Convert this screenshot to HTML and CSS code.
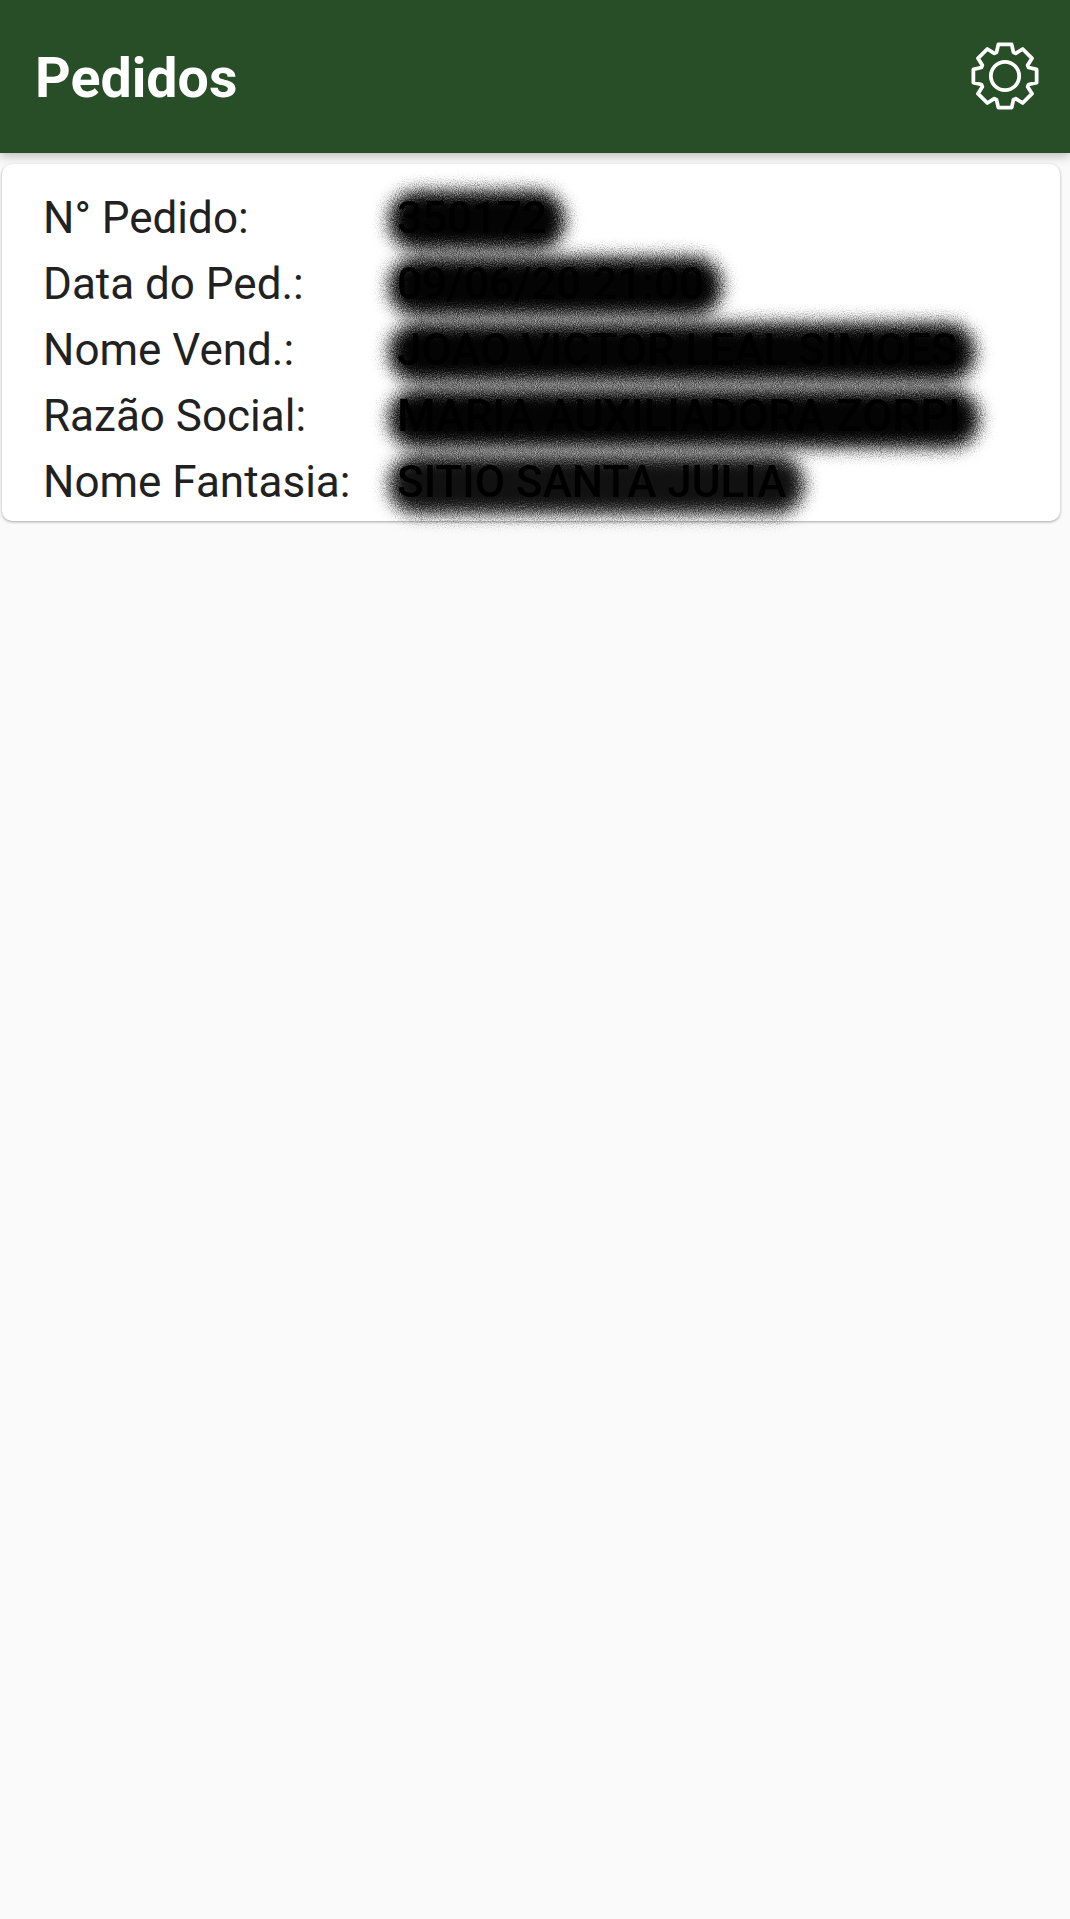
FILE: index.html
```html
<!DOCTYPE html>
<html lang="pt">
<head>
<meta charset="utf-8" />
<title>Pedidos</title>
<link rel="stylesheet" href="styles.css">
</head>
<body>
<svg class="defs" width="0" height="0">
    <filter id="grain" x="-20%" y="-80%" width="140%" height="260%" color-interpolation-filters="sRGB">
        <feGaussianBlur stdDeviation="8" result="soft"/>
        <feTurbulence type="fractalNoise" baseFrequency="0.95" numOctaves="2" seed="4" result="noise"/>
        <feDisplacementMap in="soft" in2="noise" scale="16" xChannelSelector="R" yChannelSelector="G"/>
    </filter>
</svg>
<div id="header">
    <div class="title">Pedidos</div>
    <svg class="gear" viewBox="-36 -36 72 72">
        <polygon points="-9,-25 -7,-33.5 7,-33.5 9,-25 11.3,-24 18.7,-28.6 28.6,-18.7 24,-11.3 25,-9 33.5,-7 33.5,7 25,9 24,11.3 28.6,18.7 18.7,28.6 11.3,24 9,25 7,33.5 -7,33.5 -9,25 -11.3,24 -18.7,28.6 -28.6,18.7 -24,11.3 -25,9 -33.5,7 -33.5,-7 -25,-9 -24,-11.3 -28.6,-18.7 -18.7,-28.6 -11.3,-24"/>
        <circle cx="0" cy="0" r="15"/>
    </svg>
</div>
<div id="card">
    <div class="label">N° Pedido:</div>
    <div class="value dark"><span>350172</span></div>
    <div class="label">Data do Ped.:</div>
    <div class="value dark"><span>09/06/20 21:00</span></div>
    <div class="label">Nome Vend.:</div>
    <div class="value dark"><span>JOAO VICTOR LEAL SIMOES</span></div>
    <div class="label">Razão Social:</div>
    <div class="value dark"><span>MARIA AUXILIADORA ZORPI</span></div>
    <div class="label">Nome Fantasia:</div>
    <div class="value"><span>SITIO SANTA JULIA</span></div>
</div>
</body>
</html>
```

FILE: styles.css
```css
html, body {margin: 0; padding: 0;}
body {height: 1919px; background: #fafafa; font-family: Roboto, "Liberation Sans", sans-serif; overflow: hidden;}
.defs {display: block; height: 0;}

#header {height: 153px; background: #284e28; display: flex; align-items: center; justify-content: space-between; padding: 0 31px 0 35px; box-shadow: 0 3px 10px rgba(0,0,0,.26);}
.title {color: #fff; font-size: 55.5px; font-weight: 700; margin-top: 4px;}
.gear {width: 68px; height: 68px; display: block; margin-top: -1px;}
.gear polygon, .gear circle {fill: none; stroke: #fff; stroke-width: 4; stroke-linejoin: round;}

#card {width: 1017px; margin: 11px 0 0 2px; padding: 21px 0 6px 41px; background: #fff; border-radius: 10px; box-shadow: 0 1px 3px rgba(0,0,0,.35); display: grid; grid-template-columns: 354px 1fr; grid-auto-rows: 66px; align-items: center; font-size: 44px; color: #212121;}
.value span {position: relative; z-index: 0; display: inline-block; color: #000; font-size: 44px; font-weight: 500; white-space: nowrap; filter: blur(.7px);}
.value span::before {content: ""; position: absolute; z-index: -1; left: -8px; right: -18px; top: -1px; bottom: -6px; background: #111; border-radius: 28px; filter: url(#grain);}
.value.dark span::before {background: #040404;}
```
